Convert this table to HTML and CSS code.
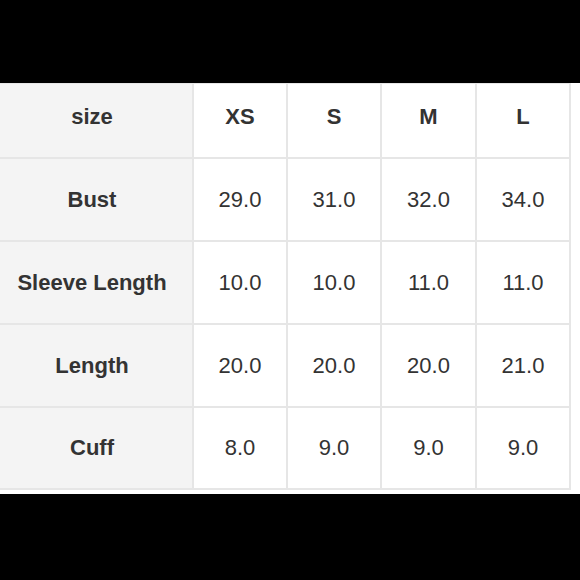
FILE: index.html
```html
<!DOCTYPE html>
<html>
<head>
<meta charset="utf-8">
<link rel="stylesheet" href="styles.css">
</head>
<body>
<div class="top"></div>
<div class="panel">
  <div class="chart">
    <div class="cell label head">size</div>
    <div class="cell head">XS</div>
    <div class="cell head">S</div>
    <div class="cell head">M</div>
    <div class="cell head">L</div>

    <div class="cell label">Bust</div>
    <div class="cell">29.0</div>
    <div class="cell">31.0</div>
    <div class="cell">32.0</div>
    <div class="cell">34.0</div>

    <div class="cell label">Sleeve Length</div>
    <div class="cell">10.0</div>
    <div class="cell">10.0</div>
    <div class="cell">11.0</div>
    <div class="cell">11.0</div>

    <div class="cell label">Length</div>
    <div class="cell">20.0</div>
    <div class="cell">20.0</div>
    <div class="cell">20.0</div>
    <div class="cell">21.0</div>

    <div class="cell label">Cuff</div>
    <div class="cell">8.0</div>
    <div class="cell">9.0</div>
    <div class="cell">9.0</div>
    <div class="cell">9.0</div>
  </div>
</div>
</body>
</html>
```

FILE: styles.css
```css
html, body {
  margin: 0;
  padding: 0;
  background: #000;
  width: 580px;
  height: 580px;
  overflow: hidden;
}

.top {
  height: 83px;
}

.panel {
  background: #fff;
  height: 411px;
  box-sizing: border-box;
}

.chart {
  width: 571px;
  display: grid;
  grid-template-columns: 192px 92px 92px 93px 92px;
  grid-template-rows: 73px 81px 81px 81px 80px;
  gap: 2px;
  background: #e6e6e6;
  padding: 1px 2px 2px 0;
  box-sizing: border-box;
  font-family: "Liberation Sans", Arial, sans-serif;
  font-size: 22px;
  color: #333;
}

.cell {
  background: #fff;
  display: flex;
  align-items: center;
  justify-content: center;
}

.label {
  background: #f4f4f4;
  font-weight: bold;
  padding-right: 8px;
}

.head {
  font-weight: bold;
  padding-bottom: 8px;
}
```
